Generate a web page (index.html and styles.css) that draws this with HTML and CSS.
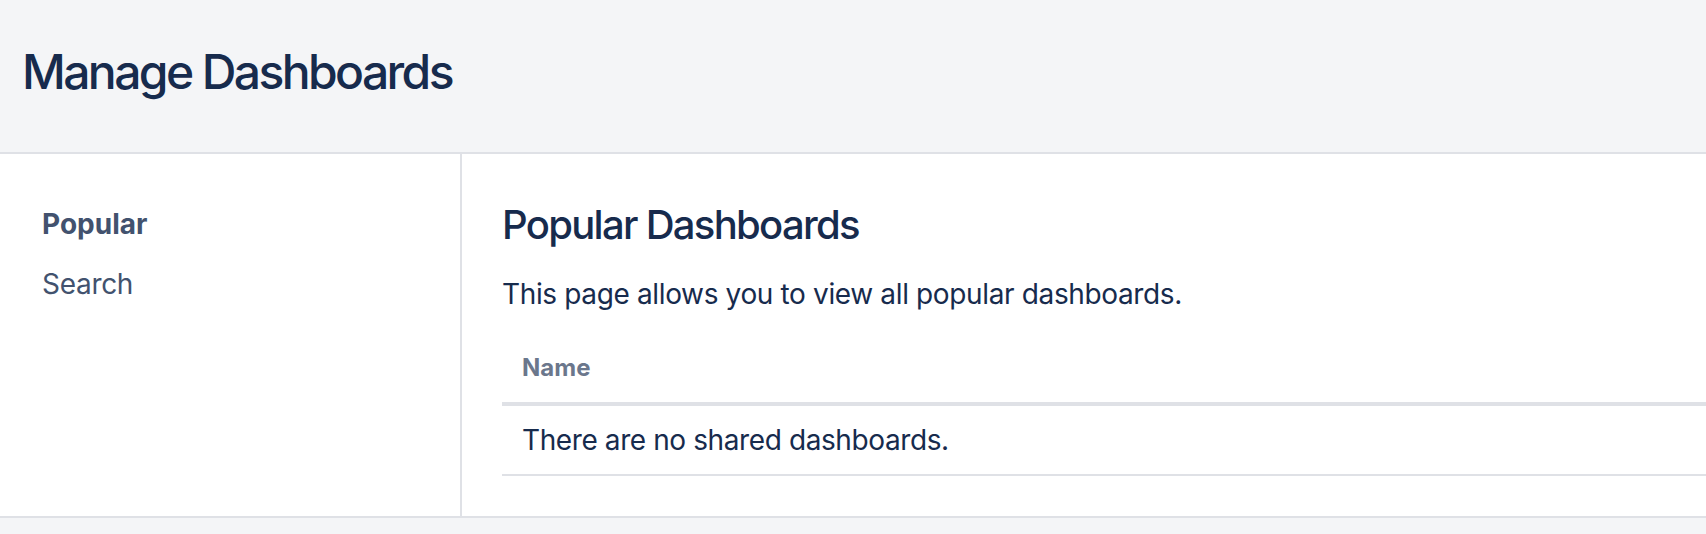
FILE: index.html
```html
<!DOCTYPE html>
<html lang="en">
<head>
<meta charset="utf-8">
<title>Manage Dashboards</title>
<link rel="stylesheet" href="styles.css">
</head>
<body>
<header class="page-header">
  <h1 class="page-title">Manage Dashboards</h1>
</header>
<main class="layout">
  <nav class="sidebar">
    <a class="nav-item nav-item-active" href="#">Popular</a>
    <a class="nav-item" href="#">Search</a>
  </nav>
  <section class="content">
    <h2 class="content-title">Popular Dashboards</h2>
    <p class="content-desc">This page allows you to view all popular dashboards.</p>
    <table class="dash-table">
      <thead>
        <tr><th class="col-name">Name</th></tr>
      </thead>
      <tbody>
        <tr><td>There are no shared dashboards.</td></tr>
      </tbody>
    </table>
  </section>
</main>
</body>
</html>
```
FILE: styles.css
```css
* { box-sizing: border-box; }
html, body {
  margin: 0;
  padding: 0;
}
body {
  background: #f4f5f7;
  font-family: Inter, "Noto Sans", "Liberation Sans", sans-serif;
  color: #172b4d;
  min-height: 534px;
}
.page-header {
  background: #f4f5f7;
  border-bottom: 2px solid #dfe1e6;
  height: 154px;
  padding: 44px 0 0 22px;
}
.page-title {
  margin: 0;
  font-size: 48px;
  line-height: 56px;
  font-weight: 500;
  color: #172b4d;
  letter-spacing: -2.6px;
}
.layout {
  display: flex;
  background: #ffffff;
  border-bottom: 2px solid #dfe1e6;
}
.sidebar {
  width: 462px;
  flex: 0 0 462px;
  border-right: 2px solid #dfe1e6;
  padding: 40px 40px 0 42px;
  display: flex;
  flex-direction: column;
}
.nav-item {
  display: block;
  font-size: 28px;
  line-height: 60px;
  color: #42526e;
  text-decoration: none;
  letter-spacing: -0.3px;
}
.nav-item-active {
  font-weight: 700;
  letter-spacing: 0;
}
.content {
  flex: 1 1 auto;
  padding: 47px 0 40px 40px;
}
.content-title {
  margin: 0;
  font-size: 40px;
  line-height: 48px;
  font-weight: 500;
  color: #172b4d;
  letter-spacing: -1.7px;
}
.content-desc {
  margin: 25px 0 0 0;
  font-size: 28px;
  line-height: 40px;
  color: #172b4d;
  letter-spacing: -0.36px;
}
.dash-table {
  margin-top: 28px;
  width: 100%;
  border-collapse: collapse;
}
.dash-table th {
  text-align: left;
  font-size: 24px;
  line-height: 32px;
  font-weight: 700;
  color: #6b778c;
  padding: 10px 20px 18px 20px;
  border-bottom: 4px solid #dfe1e6;
}
.dash-table td {
  font-size: 28px;
  line-height: 40px;
  color: #172b4d;
  padding: 14px 20px;
  border-bottom: 2px solid #dfe1e6;
  letter-spacing: -0.4px;
}
```
